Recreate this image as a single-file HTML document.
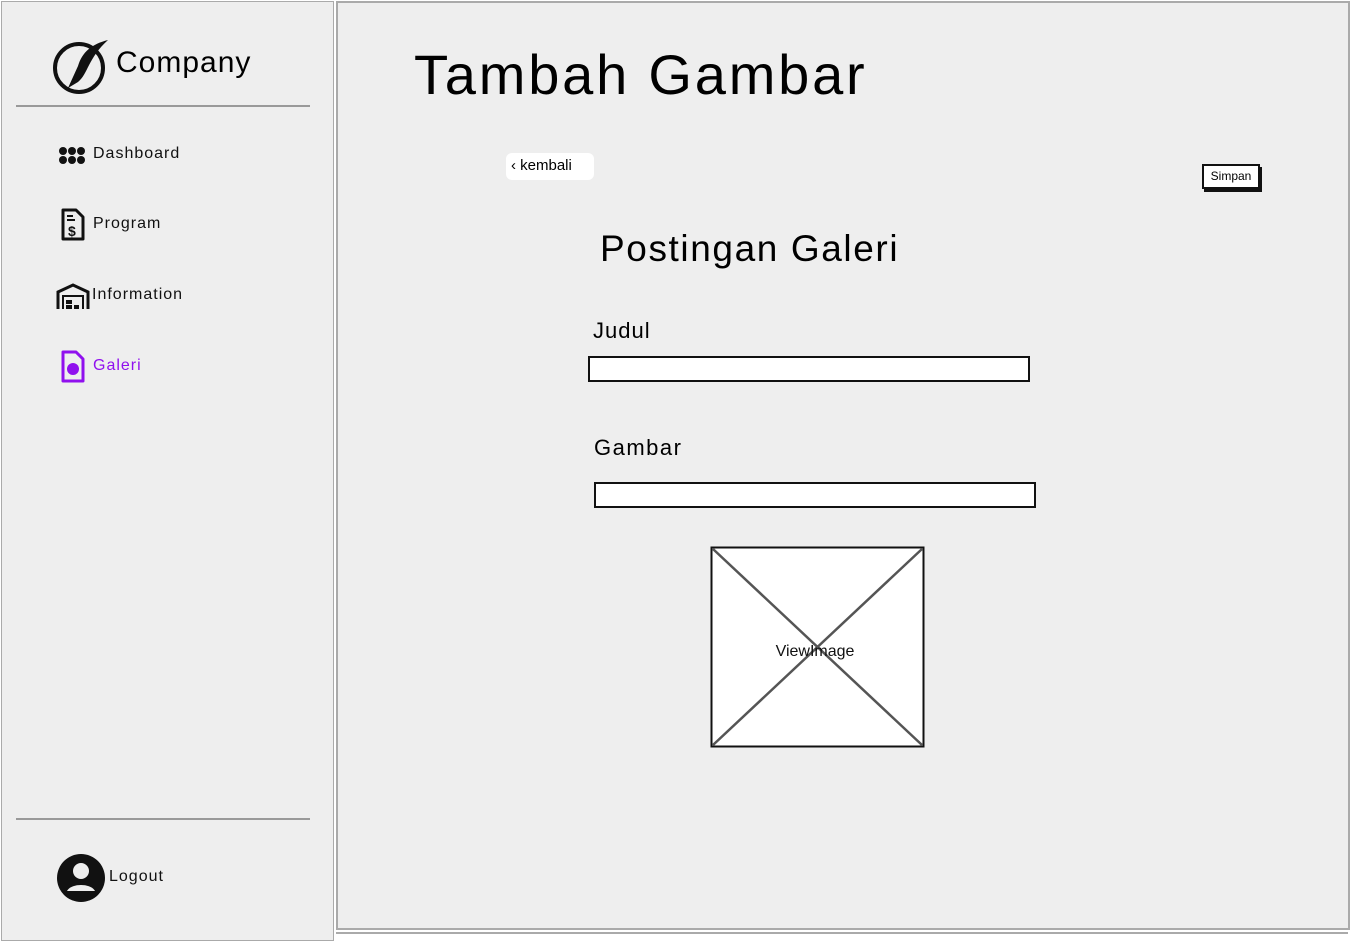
<!DOCTYPE html>
<html><head><style>
body{margin:0;width:1350px;height:942px;background:#fff;font-family:"Liberation Sans",sans-serif;position:relative;overflow:hidden}
.a{position:absolute}
.side{left:1px;top:1px;width:331px;height:938px;background:#eee;border:1.5px solid #aaa}
.main{left:336px;top:1px;width:1010px;height:925px;background:#eee;border:2px solid #aaa}
.nav{font-size:16px;color:#111;letter-spacing:1px}
.inp{background:#fff;border:2px solid #111;height:22px}
</style></head><body>
<div class="a side"></div>
<div class="a main"></div>
<div class="a" style="left:336px;top:928px;width:1012px;height:4px;border-bottom:2px solid #aaa"></div>
<svg class="a" style="left:52px;top:38px" width="58" height="58" viewBox="0 0 58 58"><circle cx="27" cy="30" r="24" fill="none" stroke="#111" stroke-width="4"/><path d="M56 2 C40 6 30 14 26 28 L16 50 L26 44 C36 36 36 20 56 2Z" fill="#111"/></svg>
<div class="a" style="left:116px;top:46px;font-size:30px;letter-spacing:1px">Company</div>
<div class="a" style="left:16px;top:105px;width:294px;border-top:2px solid #999"></div>
<svg class="a" style="left:58px;top:146px" width="30" height="20"><g fill="#111"><circle cx="5" cy="5" r="4"/><circle cx="14" cy="5" r="4"/><circle cx="23" cy="5" r="4"/><circle cx="5" cy="14" r="4"/><circle cx="14" cy="14" r="4"/><circle cx="23" cy="14" r="4"/></g></svg>
<div class="a nav" style="left:93px;top:145px">Dashboard</div>
<svg class="a" style="left:60px;top:208px" width="26" height="34"><path d="M3 2h13l7 7v22H3z" fill="none" stroke="#111" stroke-width="3" stroke-linejoin="round"/><text x="8" y="28" font-size="14" font-weight="bold" fill="#111">$</text><path d="M7 8h6M7 12h8" stroke="#111" stroke-width="2"/></svg>
<div class="a nav" style="left:93px;top:215px">Program</div>
<svg class="a" style="left:56px;top:282px" width="34" height="28"><path d="M2 27V10L17 3L32 10V27" fill="none" stroke="#111" stroke-width="3"/><path d="M7 27V14h20v13" fill="none" stroke="#111" stroke-width="2"/><rect x="10" y="18" width="6" height="4" fill="#111"/><rect x="10" y="23" width="6" height="4" fill="#111"/><rect x="18" y="23" width="5" height="4" fill="#111"/></svg>
<div class="a nav" style="left:92px;top:286px">Information</div>
<svg class="a" style="left:60px;top:350px" width="26" height="34"><path d="M3 2h13l7 7v22H3z" fill="none" stroke="#9010ee" stroke-width="3" stroke-linejoin="round"/><circle cx="13" cy="19" r="6" fill="#9010ee"/></svg>
<div class="a nav" style="left:93px;top:357px;color:#9010ee">Galeri</div>
<div class="a" style="left:16px;top:818px;width:294px;border-top:2px solid #999"></div>
<svg class="a" style="left:56px;top:853px" width="50" height="50"><circle cx="25" cy="25" r="24" fill="#111"/><circle cx="25" cy="18" r="8" fill="#eee"/><path d="M11 38c4-8 24-8 28 0" fill="#eee"/></svg>
<div class="a nav" style="left:109px;top:868px">Logout</div>
<div class="a" style="left:414px;top:42px;font-size:56px;letter-spacing:2.8px">Tambah Gambar</div>
<div class="a" style="left:506px;top:153px;width:88px;height:27px;background:#fff;border-radius:6px;font-size:15px;line-height:26px;text-indent:5px">‹ kembali</div>
<div class="a" style="left:1202px;top:164px;width:54px;height:21px;background:#fff;border:2px solid #111;box-shadow:2px 3px 0 #111;font-size:12px;line-height:21px;text-align:center">Simpan</div>
<div class="a" style="left:600px;top:228px;font-size:37px;letter-spacing:1.6px">Postingan Galeri</div>
<div class="a" style="left:593px;top:318px;font-size:22px;letter-spacing:1px">Judul</div>
<div class="a inp" style="left:588px;top:356px;width:438px"></div>
<div class="a" style="left:594px;top:435px;font-size:22px;letter-spacing:1.5px">Gambar</div>
<div class="a inp" style="left:594px;top:482px;width:438px"></div>
<svg class="a" style="left:710px;top:546px" width="216" height="203"><rect x="1.5" y="1.5" width="212" height="199" fill="#fff" stroke="#111" stroke-width="2"/><path d="M3 3L212 199M212 3L3 199" stroke="#555" stroke-width="2.5"/><text x="105" y="110" font-size="16" text-anchor="middle" fill="#111">ViewImage</text></svg>
</body></html>
